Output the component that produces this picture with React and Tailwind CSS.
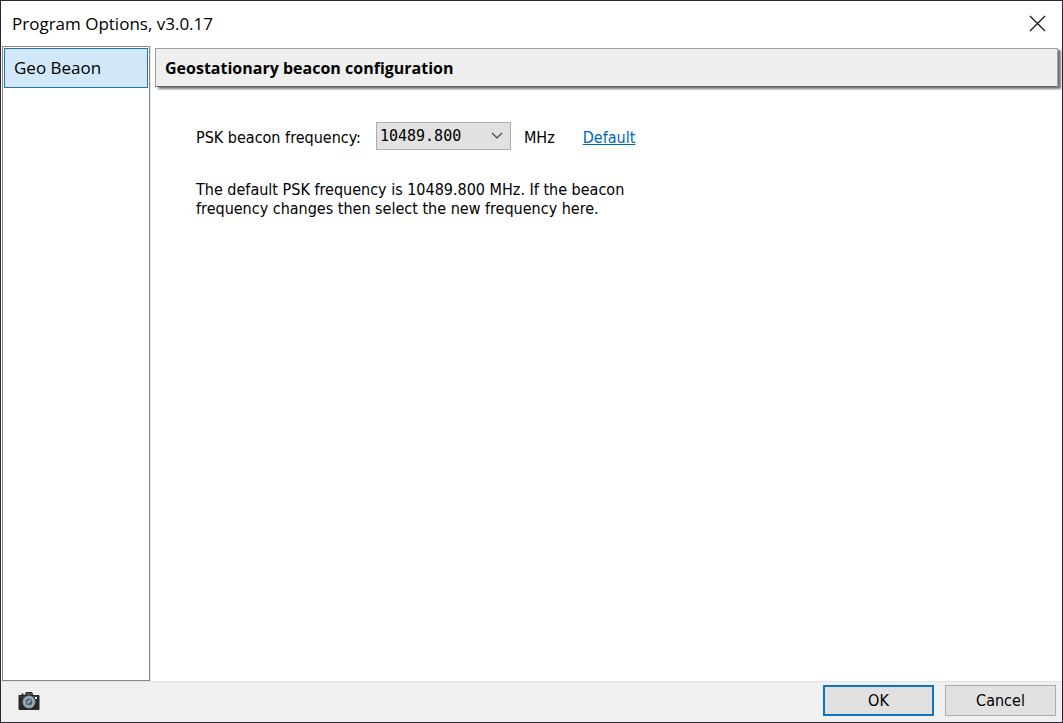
import React, { useState } from 'react';

const DEFAULT_FREQUENCY = '10489.800';
const frequencies = ['10489.750', DEFAULT_FREQUENCY, '10489.850'];

function CameraIcon() {
  return (
    <svg width="22" height="20" viewBox="0 0 22 20" aria-hidden="true">
      <path d="M0.500 4h3V2.500h2V4h1L8 1h6l1.500 3h5.500l.5 1v13l-.5 1H1l-.5-1z" fill="#262829" />
      <path d="M8 2h6l1 2H7z" fill="#4a4e50" />
      <path d="M1.500 5h19v1.500h-19z" fill="#3b3e40" />
      <circle cx="11" cy="11" r="6.500" fill="#8d979b" />
      <circle cx="11" cy="11" r="5" fill="#aab4b8" />
      <circle cx="11" cy="11" r="3.500" fill="#4d6575" />
      <path d="M9 12.500c0-2 1.500-3.500 4-3.500-.5 2-2 3-4 3.500z" fill="#a9c3d3" />
      <rect x="17" y="6" width="2" height="2" fill="#f4f4f4" />
    </svg>
  );
}

export default function App() {
  const [frequency, setFrequency] = useState(DEFAULT_FREQUENCY);

  return (
    <div className="min-h-screen flex flex-col bg-white border border-[#2b2831] text-black font-['DejaVu_Sans_Condensed','DejaVu_Sans',sans-serif] text-base">
      <header className="h-[45px] shrink-0 flex items-center justify-between pl-[11px] pr-4 font-['Open_Sans',sans-serif]">
        <h1 className="text-[17px]">Program Options, v3.0.17</h1>
        <button type="button" aria-label="Close">
          <svg width="17" height="17" viewBox="0 0 17 17" fill="none" stroke="#111" strokeWidth="1.200">
            <path d="M1 1l15 15M16 1L1 16" />
          </svg>
        </button>
      </header>

      <div className="flex-1 flex">
        <nav className="w-[148px] shrink-0 ml-px border border-[#828790] p-px font-['Open_Sans',sans-serif]">
          <button type="button" className="w-full h-10 px-[9px] text-left text-[17px] bg-[#d1e8f8] border border-[#26749e]">
            Geo Beaon
          </button>
        </nav>

        <main className="flex-1 border-l border-[#e3e3e3] px-1 pt-[2px]">
          <div className="h-[39px] flex items-center px-[9px] bg-[#efefef] border border-[#a0a0a0] border-b-[#666] shadow-[3px_2px_2px_#777]">
            <h2 className="font-['Open_Sans',sans-serif] text-base font-bold">Geostationary beacon configuration</h2>
          </div>

          <section className="pl-[41px] pt-[35px]">
            <div className="flex items-end">
              <label htmlFor="frequency" className="mr-[15px]">PSK beacon frequency:</label>
              <div className="relative mr-[13px]">
                <select
                  id="frequency"
                  value={frequency}
                  onChange={e => setFrequency(e.target.value)}
                  className="appearance-none block w-[135px] h-7 pl-[3px] pr-6 bg-[#e1e1e1] border border-[#adadad] font-['DejaVu_Sans_Mono',monospace] text-[15px]"
                >
                  {frequencies.map(f => <option key={f} value={f}>{f}</option>)}
                </select>
                <svg className="absolute right-2 top-[10px] pointer-events-none" width="12" height="8" viewBox="0 0 12 8" fill="none" stroke="#444" strokeWidth="1.200">
                  <path d="M1 1l5 5 5-5" />
                </svg>
              </div>
              <span className="mr-7">MHz</span>
              <a href="#default" onClick={() => setFrequency(DEFAULT_FREQUENCY)} className="text-[#0066b4] underline">Default</a>
            </div>
            <p className="max-w-[440px] mt-[30px] leading-[19px]">
              The default PSK frequency is 10489.800 MHz. If the beacon frequency changes then select the new frequency here.
            </p>
          </section>
        </main>
      </div>

      <footer className="h-[41px] shrink-0 flex items-center bg-[#f0f0f0] border-t border-[#e3e3e3] pl-[17px] pr-[6px] pb-[3px]">
        <button type="button" aria-label="Screenshot">
          <CameraIcon />
        </button>
        <div className="flex gap-[11px] ml-auto">
          <button type="button" className="w-[111px] h-[31px] bg-[#e1e1e1] border-2 border-[#0f73bd]">OK</button>
          <button type="button" className="w-[111px] h-[31px] bg-[#e1e1e1] border border-[#adadad]">Cancel</button>
        </div>
      </footer>
    </div>
  );
}
